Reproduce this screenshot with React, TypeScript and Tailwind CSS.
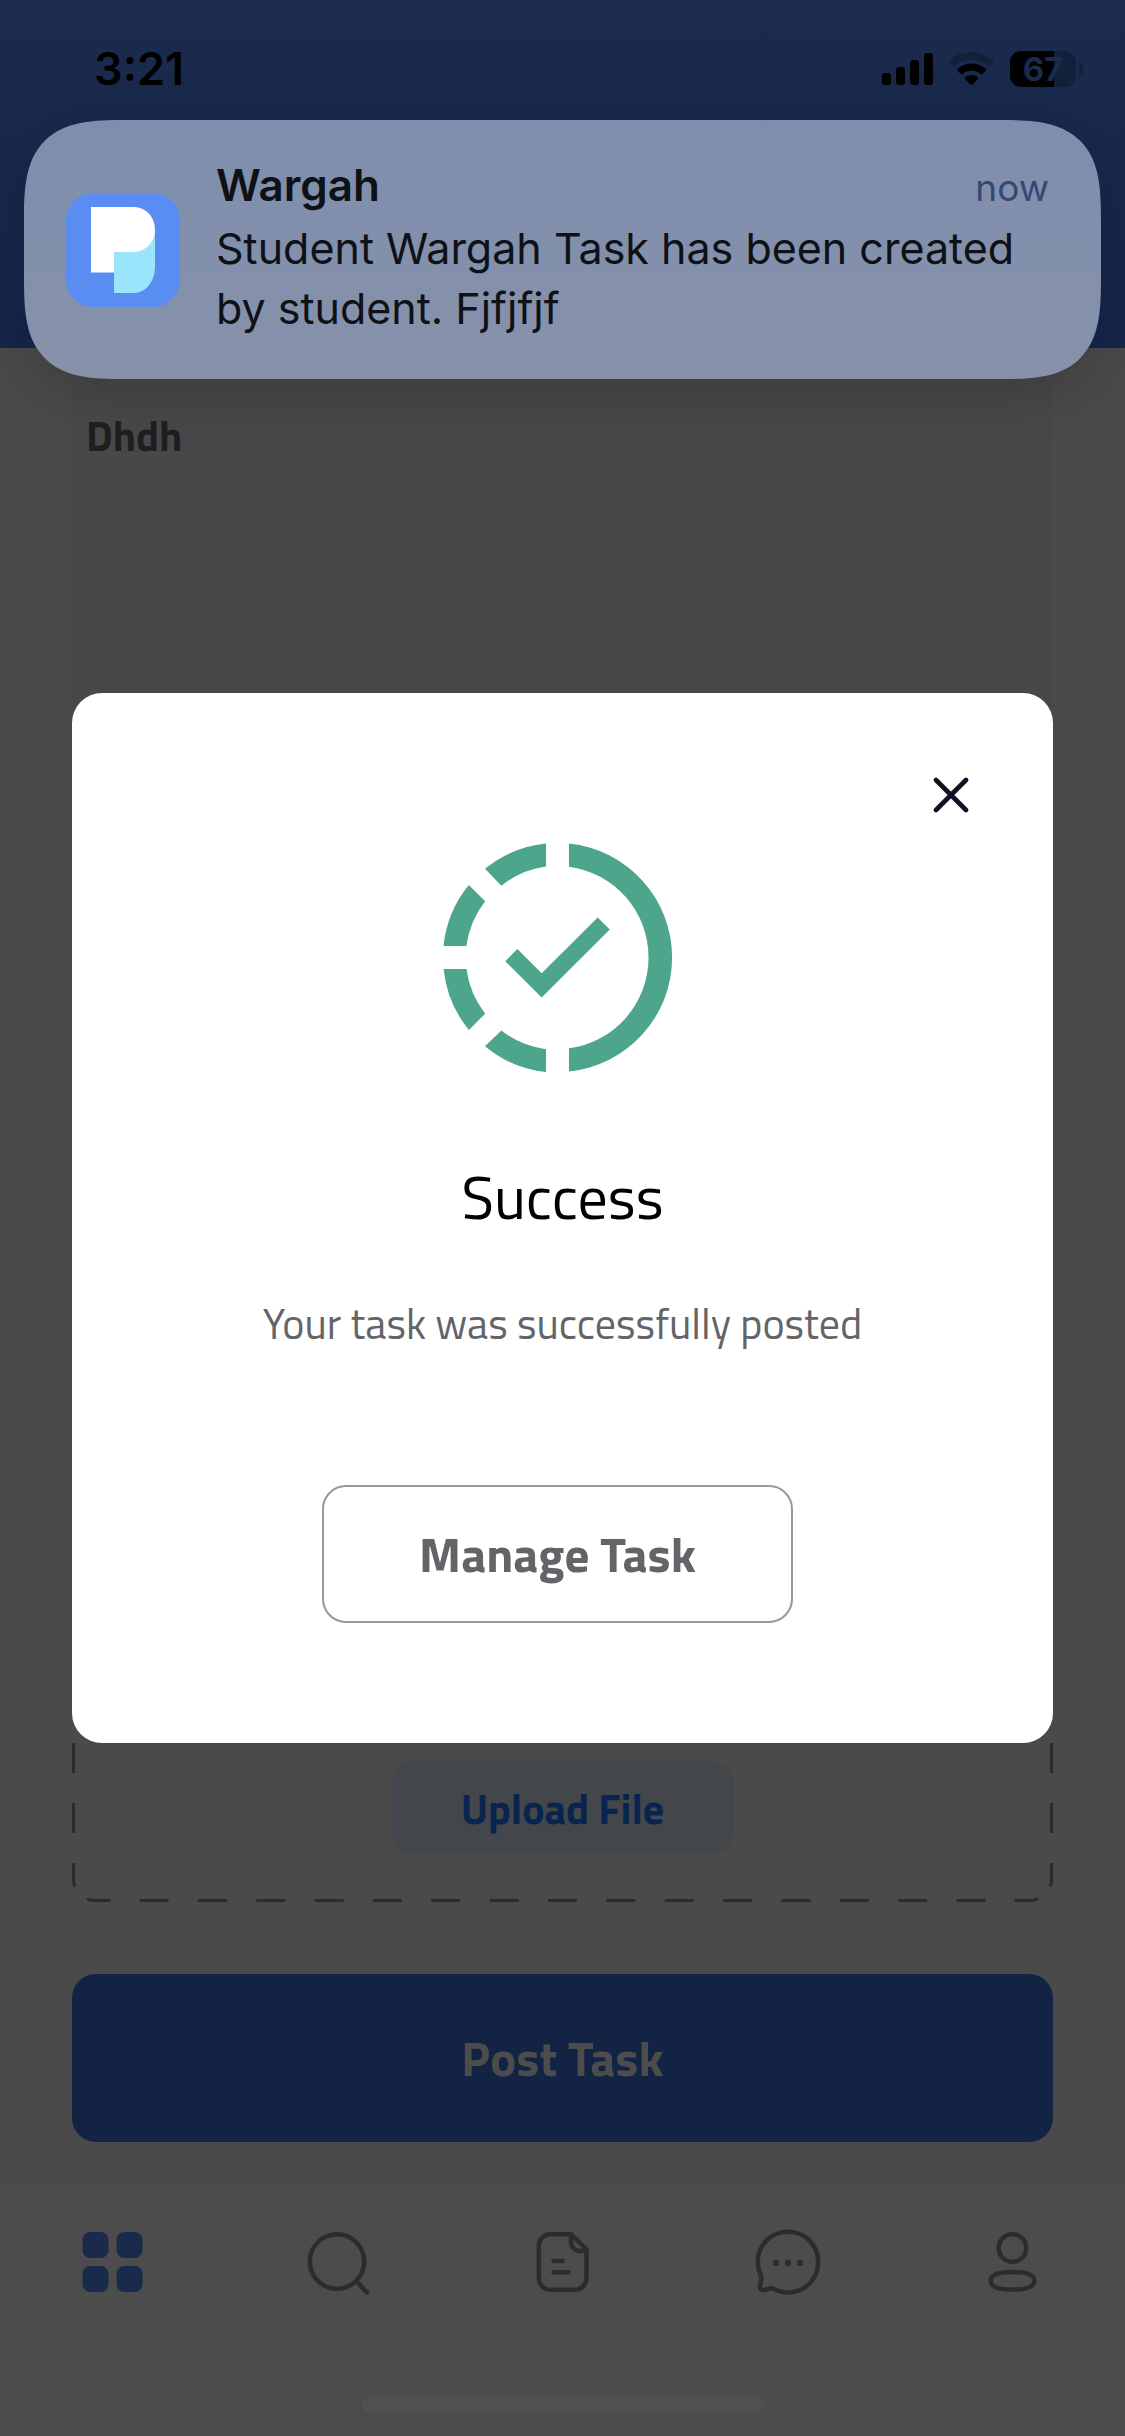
import type { ReactNode } from "react";

const navItems: { label: string; icon: ReactNode }[] = [
    {
        label: "Dashboard",
        icon: (
            <g fill="#1a2a4c" stroke="none">
                <rect x="5.500" y="6" width="26" height="26" rx="8" />
                <rect x="39.500" y="6" width="26" height="26" rx="8" />
                <rect x="5.500" y="40" width="26" height="26" rx="8" />
                <rect x="39.500" y="40" width="26" height="26" rx="8" />
            </g>
        ),
    },
    {
        label: "Search",
        icon: (
            <>
                <circle cx="35" cy="35.5" r="27.2" />
                <path d="M55 56 65 66.5" />
            </>
        ),
    },
    {
        label: "Tasks",
        icon: (
            <>
                <path d="M44 8.2H23.5A11.7 11.7 0 0 0 11.8 20v32A11.7 11.7 0 0 0 23.5 63.8h24.2A11.7 11.7 0 0 0 59.5 52V23.5Z" />
                <path d="M44 8.2V16a9 9 0 0 0 9 9H59.5" />
                <path d="M26.5 35H35.5M26.5 46.3H41.5" />
            </>
        ),
    },
    {
        label: "Messages",
        icon: (
            <>
                <path d="M36 5.8C53 5.8 66.2 19.3 66.2 36S53 66.4 36 66.4c-4 0-8-.7-11.3-2.2-2.4-1.1-3.7-2-5.7-1.9-2.5.2-5.3 1.8-7.7 1.8-2.3 0-3.8-2-3.4-4.4.6-3.2 1.9-5.7 1.5-8.6-.3-2-1-3-1.7-4.8A29 29 0 0 1 5.7 36C5.7 19.3 19 5.8 36 5.8Z" />
                <g fill="#2c2c2c" stroke="none">
                    <circle cx="24" cy="37" r="3.2" />
                    <circle cx="36" cy="37" r="3.2" />
                    <circle cx="48" cy="37" r="3.2" />
                </g>
            </>
        ),
    },
    {
        label: "Profile",
        icon: (
            <>
                <circle cx="35.5" cy="22" r="13.8" />
                <path d="M35.5 46c14 0 21.8 2.6 21.8 8.7s-7.8 8.900-21.800 8.900-21.800-2.800-21.800-8.900S21.500 46 35.500 46Z" />
            </>
        ),
    },
];

function StatusBar() {
    return (
        <div className="flex h-[120px] items-center justify-between pt-[18px] pr-[42px] pl-[94px] font-['Inter',sans-serif]">
            <span className="text-[45px] leading-[48px] font-semibold text-black">3:21</span>
            <div className="flex items-center gap-4">
                <svg className="h-9 w-[51px]" viewBox="0 0 51 36" aria-hidden="true">
                    <rect x="0" y="22" width="9" height="12" rx="3" />
                    <rect x="14" y="16" width="9" height="18" rx="3" />
                    <rect x="28" y="9" width="9" height="25" rx="3" />
                    <rect x="42" y="2" width="9" height="32" rx="3" />
                </svg>
                <svg className="h-9 w-[45px]" viewBox="0 0 45 36" aria-hidden="true">
                    <path
                        d="M22.5 1C31 1 38.8 4.3 44.4 9.6c.6.6.6 1.4 0 2L41 15c-.6.5-1.3.5-1.9 0a24.5 24.5 0 0 0-33.2 0c-.6.5-1.3.5-1.9 0L.6 11.6c-.6-.6-.6-1.4 0-2C6.2 4.3 14 1 22.5 1Z"
                        fill="#13203a"
                    />
                    <path d="M22.5 12.5c5.4 0 10.3 2 14 5.3.6.6.6 1.3 0 1.9l-3.3 3.4c-.6.6-1.3.5-1.9 0a13.5 13.5 0 0 0-17.6 0c-.6.5-1.3.6-1.9 0l-3.3-3.4c-.6-.6-.6-1.3 0-1.9 3.7-3.3 8.6-5.3 14-5.3Z" />
                    <path d="M22.5 24c2.4 0 4.6.8 6.3 2.2.6.5.6 1.2.1 1.8l-5.3 5.5c-.6.7-1.6.7-2.2 0L16.1 28c-.5-.6-.5-1.3.1-1.8A10 10 0 0 1 22.5 24Z" />
                </svg>
                <div className="flex items-center gap-[3px]">
                    <div className="flex h-9 w-[66px] items-center justify-center rounded-[11px] bg-linear-to-r from-black from-67% to-[#13203a] to-67%">
                        <span className="text-[33px] leading-9 font-bold text-[#1b2b4d]">67</span>
                    </div>
                    <div className="h-3 w-1 rounded-r-full bg-[#13203a]" />
                </div>
            </div>
        </div>
    );
}

function Notification() {
    return (
        <section
            aria-label="Notification"
            className="absolute inset-x-6 top-[120px] flex min-h-[259px] items-center gap-9 rounded-[102px] bg-linear-to-b from-[#7f8eae] to-[#8792a9] pr-[52px] pl-[42px] font-['Inter',sans-serif] shadow-[0_12px_60px_rgba(0,0,0,0.18)] [corner-shape:superellipse(1.6)]"
        >
            <svg className="size-[114px] shrink-0" viewBox="0 0 114 114" aria-hidden="true">
                <rect width="114" height="114" rx="27" fill="#5a8df2" />
                <path d="M48 37h41v37a21 26 0 0 1-21 26H48Z" fill="#9ae4fc" />
                <path d="M25 14h43a21 22.5 0 0 1 0 45H48v20.5H25Z" fill="#fff" />
            </svg>
            <div className="flex-1 pb-1.5">
                <div className="flex items-baseline justify-between">
                    <h2 className="text-[44px] leading-[60px] font-semibold text-[#0e1116]">Wargah</h2>
                    <span className="text-[37px] leading-[60px] text-[#354872]">now</span>
                </div>
                <p className="max-w-[840px] text-[43px] leading-[60px] text-[#0e1116]">
                    Student Wargah Task has been created by student. Fjfjfjf
                </p>
            </div>
        </section>
    );
}

function UploadArea() {
    return (
        <div className="relative flex flex-1 items-end justify-center pb-12">
            <svg
                className="absolute inset-x-0 bottom-0 h-[159px] w-full overflow-visible"
                fill="none"
                stroke="#2c2c2c"
                strokeWidth="3"
                aria-hidden="true"
            >
                <path d="M1.5 0V30M1.5 60V90M1.5 120V137Q1.5 141 3 143.5M15 155.5Q18 157.5 22 157.5H38.5" />
                <line x1="67.5" y1="157.5" x2="95%" y2="157.5" strokeDasharray="29 29.36" />
                <svg x="100%" className="overflow-visible">
                    <path d="M-1.5 0V30M-1.5 60V90M-1.5 120V137Q-1.5 141-3 143.5M-15 155.5Q-18 157.5-22 157.5H-38.5" />
                </svg>
            </svg>
            <button className="h-[93px] rounded-3xl bg-[#43464a] px-[70px] text-[42px] leading-[48px] font-bold text-[#0a2450]">
                Upload File
            </button>
        </div>
    );
}

function SuccessDialog() {
    return (
        <div className="absolute inset-0 flex items-center px-[72px]">
            <div
                role="dialog"
                aria-labelledby="dialog-title"
                className="flex w-full flex-col items-center rounded-[30px] bg-white pt-[78px] pb-[120px]"
            >
                <button aria-label="Close" className="mr-[78px] flex size-12 items-center justify-center self-end">
                    <svg
                        className="size-9"
                        viewBox="0 0 36 36"
                        stroke="#131024"
                        strokeWidth="4.6"
                        strokeLinecap="round"
                        aria-hidden="true"
                    >
                        <path d="M3 3 33 33M33 3 3 33" />
                    </svg>
                </button>
                <svg className="mt-px mr-2.5 size-[275px]" viewBox="0 0 24 24" fill="#4da68c" aria-hidden="true">
                    <path d="M13 2.05a10 10 0 0 1 0 19.9v-2.02a8 8 0 0 0 0-15.86Z" />
                    <path d="M11 2.06v2a8 8 0 0 0-3.9 1.68L5.67 4.26A10 10 0 0 1 11 2.06Z" />
                    <path d="M4.26 5.67 5.69 7.1A8 8 0 0 0 4.05 11h-2a10 10 0 0 1 2.21-5.33Z" />
                    <path d="M2.06 13h2a8 8 0 0 0 1.63 3.9l-1.42 1.43A10 10 0 0 1 2.06 13Z" />
                    <path d="M7.1 18.37A8 8 0 0 0 11 20v2a10 10 0 0 1-5.33-2.26Z" />
                    <path d="m15.5 8.5 1.06 1.06-5.94 5.94-3.18-3.18 1.06-1.06 2.12 2.12Z" />
                </svg>
                <h1 id="dialog-title" className="mt-[66px] text-[60px] leading-[72px] text-black">
                    Success
                </h1>
                <p className="mt-[66px] text-[42px] leading-[48px] text-[#646468]">Your task was successfully posted</p>
                <button className="mt-[138px] mr-2.5 h-[138px] rounded-3xl border-2 border-[#989898] px-[95px] text-[49px] leading-[48px] font-bold text-[#646468]">
                    Manage Task
                </button>
            </div>
        </div>
    );
}

export default function App() {
    return (
        <div className="relative flex min-h-screen flex-col bg-[#4a4a4a] font-['Titillium_Web','Roboto',sans-serif]">
            <header className="h-[348px] bg-linear-to-b from-[#1b2b4d] to-[#15264b]">
                <StatusBar />
            </header>

            <main className="flex flex-1 flex-col px-[72px] pt-6 pb-[45px]">
                <textarea
                    aria-label="Task description"
                    defaultValue="Dhdh"
                    className="h-[480px] w-full resize-none rounded-3xl bg-[#474849] px-3.5 pt-[39px] text-[42px] leading-[48px] font-bold text-[#1f1f21] outline-none"
                />
                <UploadArea />
                <button className="mt-[72px] h-[168px] w-full rounded-3xl bg-[#132344] text-[49px] leading-[48px] font-bold text-[#4c4c4c]">
                    Post Task
                </button>
            </main>

            <nav className="flex h-[249px] flex-col justify-between bg-[#4c4c4c] pt-[39px] pb-6">
                <div className="grid grid-cols-5">
                    {navItems.map((item) => (
                        <a key={item.label} href="#" aria-label={item.label} className="flex justify-center">
                            <svg
                                className="size-[72px]"
                                viewBox="0 0 72 72"
                                fill="none"
                                stroke="#2c2c2c"
                                strokeWidth="4.5"
                                strokeLinecap="round"
                                strokeLinejoin="round"
                                aria-hidden="true"
                            >
                                {item.icon}
                            </svg>
                        </a>
                    ))}
                </div>
                <div className="mx-auto h-[15px] w-[402px] rounded-full bg-[#515151]" />
            </nav>

            <SuccessDialog />
            <Notification />
        </div>
    );
}
